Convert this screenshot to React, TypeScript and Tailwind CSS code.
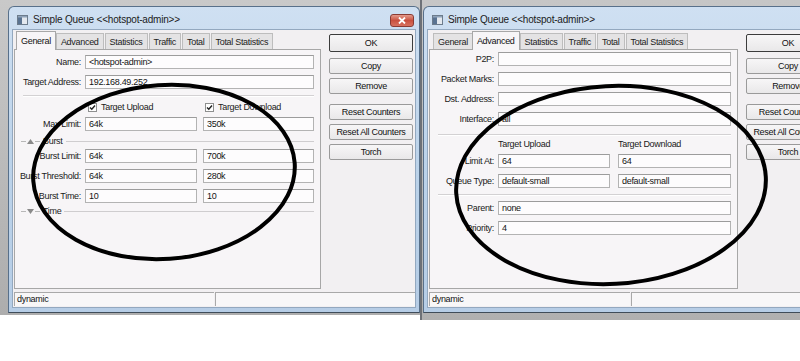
import React from "react";

const FONT = "font-['Liberation_Sans',Arial,sans-serif] tracking-[-0.3px]";

function Field({ value = "", className = "" }: { value?: string; className?: string }) {
  return (
    <div
      className={`h-[14px] border border-[#b3b3b3] border-t-[#9c9c9c] bg-[#fdfcfd] pl-[3px] text-[9px] leading-[12px] text-[#141414] whitespace-nowrap overflow-hidden ${className}`}
    >
      {value}
    </div>
  );
}

function Label({ text, w }: { text: string; w: string }) {
  return (
    <div className={`${w} shrink-0 text-right pr-[4px] text-[9px] leading-[12px] text-[#1a1a1a] whitespace-nowrap`}>
      {text}
    </div>
  );
}

function Sep({ className = "" }: { className?: string }) {
  return (
    <div className={`h-[2px] border-t border-[#d3d1d3] border-b border-b-white ${className}`} />
  );
}

function Check({ label, className = "" }: { label: string; className?: string }) {
  return (
    <div className={`flex items-center gap-[4px] ${className}`}>
      <div className="w-[9px] h-[9px] border border-[#8e8f8f] bg-white flex items-center justify-center">
        <svg width="7" height="7" viewBox="0 0 7 7">
          <path d="M1 3.5 L2.8 5.3 L6 1.5" stroke="#222" strokeWidth="1.4" fill="none" />
        </svg>
      </div>
      <span className="text-[9px] leading-[12px] text-[#1a1a1a]">{label}</span>
    </div>
  );
}

function GroupHeader({ label, down = false, className = "" }: { label: string; down?: boolean; className?: string }) {
  return (
    <div className={`flex items-center h-[10px] ${className}`}>
      <div className="w-[5px] h-px bg-[#b8b8b8]" />
      <svg width="7" height="5" viewBox="0 0 7 5" className="mx-[1px]">
        {down ? <path d="M0 0 L7 0 L3.5 5 Z" fill="#8a8a8a" /> : <path d="M0 5 L7 5 L3.5 0 Z" fill="#8a8a8a" />}
      </svg>
      <div className="w-[5px] h-px bg-[#b8b8b8]" />
      <span className="ml-[3px] mr-[3px] text-[9px] leading-[10px] text-[#1a1a1a]">{label}</span>
      <div className="flex-1 h-px bg-[#cfcdcf]" />
    </div>
  );
}

function Tabs({ tabs, active }: { tabs: string[]; active: number }) {
  return (
    <div className="flex items-end h-[18px] pl-[3px]">
      {tabs.map((t, i) =>
        i === active ? (
          <div
            key={t}
            className="relative z-10 -mb-px h-[19px] px-[4px] pt-[3px] bg-[#f7f5f7] border border-b-0 border-[#a7a7a7] text-[9px] leading-[12px] text-[#111] mx-[-1px]"
          >
            {t}
          </div>
        ) : (
          <div
            key={t}
            className="h-[16px] px-[4px] pt-[2px] bg-[#e4e3e4] border border-b-0 border-[#bdbdbd] text-[9px] leading-[12px] text-[#222] ml-[1px]"
          >
            {t}
          </div>
        )
      )}
    </div>
  );
}

function Btn({ label, def = false, className = "" }: { label: string; def?: boolean; className?: string }) {
  return (
    <div
      className={`${def ? "h-[18px] border-[#3c3c3c]" : "h-[16px] border-[#9a9a9a]"} w-[84px] shrink-0 border rounded-[2px] bg-gradient-to-b from-[#f7f6f7] to-[#e9e8e9] flex items-center justify-center text-[9px] leading-[12px] text-[#111] whitespace-nowrap overflow-hidden ${className}`}
    >
      {label}
    </div>
  );
}

function Buttons() {
  return (
    <div className="flex flex-col ml-[8px] pt-[4px]">
      <Btn label="OK" def />
      <Btn label="Copy" className="mt-[6px]" />
      <Btn label="Remove" className="mt-[4px]" />
      <Btn label="Reset Counters" className="mt-[10px]" />
      <Btn label="Reset All Counters" className="mt-[4px]" />
      <Btn label="Torch" className="mt-[4px]" />
    </div>
  );
}

function WinIcon() {
  return (
    <svg width="11" height="10" viewBox="0 0 11 10">
      <rect x="0.5" y="0.5" width="10" height="9" fill="#e3e8ee" stroke="#6d7c8c" />
      <rect x="1" y="1" width="4" height="8" fill="#5a7391" />
      <rect x="1" y="1" width="9" height="1.5" fill="#8fa3b9" />
    </svg>
  );
}

function CloseBtn() {
  return (
    <div className="w-[24px] h-[13px] rounded-[3px] border border-[#8a3b33] bg-gradient-to-b from-[#e39a8c] via-[#c9503f] to-[#d7715f] flex items-center justify-center">
      <svg width="8" height="7" viewBox="0 0 8 7">
        <path d="M1 0.5 L7 6.5 M7 0.5 L1 6.5" stroke="white" strokeWidth="1.8" />
      </svg>
    </div>
  );
}

function TitleBar({ showClose }: { showClose: boolean }) {
  return (
    <div className="h-[22px] flex items-center pt-[4px] pl-[8px] pr-[5px]">
      <WinIcon />
      <span className="ml-[5px] text-[10px] leading-[12px] tracking-[-0.2px] text-[#1b1b1b] flex-1 whitespace-nowrap">
        Simple Queue &lt;&lt;hotspot-admin&gt;&gt;
      </span>
      {showClose && <CloseBtn />}
    </div>
  );
}

function StatusBar({ firstW }: { firstW: string }) {
  return (
    <div className="flex h-[14px] mt-[3px] ml-[1px]">
      <div className={`${firstW} shrink-0 border-t border-l border-[#a9a9a9] bg-[#f8f7f8] pl-[2px] text-[9px] leading-[12px] text-[#111]`}>
        dynamic
      </div>
      <div className="flex-1 ml-[1px] border-t border-l border-[#a9a9a9] bg-[#f8f7f8]" />
    </div>
  );
}

function Window({
  tabs,
  active,
  panelW,
  firstStatusW,
  showClose,
  children,
}: {
  tabs: string[];
  active: number;
  panelW: string;
  firstStatusW: string;
  showClose: boolean;
  children: React.ReactNode;
}) {
  return (
    <div className="w-[412px] h-[307px] shrink-0 rounded-t-[6px] border border-[#58708a] border-b-[#3f4c59] bg-gradient-to-b from-[#cfe0f2] via-[#bcd3ea] to-[#b6cde6] flex flex-col">
      <TitleBar showClose={showClose} />
      <div className="mx-[3px] h-[279px] bg-[#f2f0f2] border border-[#93a8bf] flex flex-col">
        <div className="flex">
          <div className={`${panelW} shrink-0 ml-[1px] mt-[1px] flex flex-col`}>
            <Tabs tabs={tabs} active={active} />
            <div className="h-[240px] border border-[#a7a7a7] bg-[#f7f5f7]">{children}</div>
          </div>
          <Buttons />
        </div>
        <StatusBar firstW={firstStatusW} />
      </div>
    </div>
  );
}

const TABS = ["General", "Advanced", "Statistics", "Traffic", "Total", "Total Statistics"];

function LeftContent() {
  const lw = "w-[70px]";
  return (
    <div className="flex flex-col pt-[5px] pr-[6px]">
      <div className="flex items-center">
        <Label text="Name:" w={lw} />
        <Field value="<hotspot-admin>" className="flex-1" />
      </div>
      <div className="flex items-center mt-[6px]">
        <Label text="Target Address:" w={lw} />
        <Field value="192.168.49.252" className="flex-1" />
      </div>
      <Sep className="mt-[6px] ml-[8px]" />
      <div className="flex items-center mt-[5px] h-[10px]">
        <div className={`${lw} shrink-0`} />
        <div className="w-[112px] pl-[3px]">
          <Check label="Target Upload" />
        </div>
        <div className="w-[111px] ml-[6px] pl-[2px]">
          <Check label="Target Download" />
        </div>
      </div>
      <div className="flex items-center mt-[5px]">
        <Label text="Max Limit:" w={lw} />
        <Field value="64k" className="w-[112px]" />
        <Field value="350k" className="flex-1 ml-[6px]" />
      </div>
      <GroupHeader label="Burst" className="mt-[5px] ml-[6px]" />
      <div className="flex items-center mt-[3px]">
        <Label text="Burst Limit:" w={lw} />
        <Field value="64k" className="w-[112px]" />
        <Field value="700k" className="flex-1 ml-[6px]" />
      </div>
      <div className="flex items-center mt-[6px]">
        <Label text="Burst Threshold:" w={lw} />
        <Field value="64k" className="w-[112px]" />
        <Field value="280k" className="flex-1 ml-[6px]" />
      </div>
      <div className="flex items-center mt-[6px]">
        <Label text="Burst Time:" w={lw} />
        <Field value="10" className="w-[112px]" />
        <Field value="10" className="flex-1 ml-[6px]" />
      </div>
      <GroupHeader label="Time" down className="mt-[3px] ml-[6px]" />
    </div>
  );
}

function RightContent() {
  const lw = "w-[68px]";
  return (
    <div className="flex flex-col pt-[2px] pr-[6px]">
      <div className="flex items-center">
        <Label text="P2P:" w={lw} />
        <Field className="flex-1" />
      </div>
      <div className="flex items-center mt-[6px]">
        <Label text="Packet Marks:" w={lw} />
        <Field className="flex-1" />
      </div>
      <div className="flex items-center mt-[6px]">
        <Label text="Dst. Address:" w={lw} />
        <Field className="flex-1" />
      </div>
      <div className="flex items-center mt-[6px]">
        <Label text="Interface:" w={lw} />
        <Field value="all" className="flex-1" />
      </div>
      <Sep className="mt-[8px] ml-[8px]" />
      <div className="flex items-center mt-[3px] h-[10px] text-[9px] leading-[10px] text-[#1a1a1a]">
        <div className={`${lw} shrink-0`} />
        <div className="w-[112px]">Target Upload</div>
        <div className="ml-[8px]">Target Download</div>
      </div>
      <div className="flex items-center mt-[5px]">
        <Label text="Limit At:" w={lw} />
        <Field value="64" className="w-[112px]" />
        <Field value="64" className="flex-1 ml-[8px]" />
      </div>
      <div className="flex items-center mt-[6px]">
        <Label text="Queue Type:" w={lw} />
        <Field value="default-small" className="w-[112px]" />
        <Field value="default-small" className="flex-1 ml-[8px]" />
      </div>
      <Sep className="mt-[6px] ml-[8px]" />
      <div className="flex items-center mt-[5px]">
        <Label text="Parent:" w={lw} />
        <Field value="none" className="flex-1" />
      </div>
      <div className="flex items-center mt-[6px]">
        <Label text="Priority:" w={lw} />
        <Field value="4" className="flex-1" />
      </div>
    </div>
  );
}

export default function App() {
  return (
    <div className={`relative w-[800px] h-[361px] bg-white overflow-hidden ${FONT}`}>
      <div className="flex items-start">
        <div className="w-[420px] h-[315px] shrink-0 bg-gradient-to-b from-[#c9c9c9] to-[#adadad] pl-[8px] pt-[6px]">
          <Window tabs={TABS} active={0} panelW="w-[307px]" firstStatusW="w-[200px]" showClose>
            <LeftContent />
          </Window>
        </div>
        <div className="w-[380px] h-[320px] shrink-0 bg-gradient-to-b from-[#c6c6c6] to-[#b0b0b0] pl-[1px] pt-[6px] overflow-hidden border-l-2 border-[#6d7177]">
          <Window tabs={TABS} active={1} panelW="w-[309px]" firstStatusW="w-[201px]" showClose={false}>
            <RightContent />
          </Window>
        </div>
      </div>
      <svg className="absolute inset-0 pointer-events-none" width="800" height="361" viewBox="0 0 800 361">
        <ellipse cx="164" cy="172" rx="131" ry="87" transform="rotate(-4 164 172)" fill="none" stroke="#000" strokeWidth="4" />
        <ellipse cx="611" cy="185" rx="155" ry="99" transform="rotate(-3 611 185)" fill="none" stroke="#000" strokeWidth="4" />
      </svg>
    </div>
  );
}
